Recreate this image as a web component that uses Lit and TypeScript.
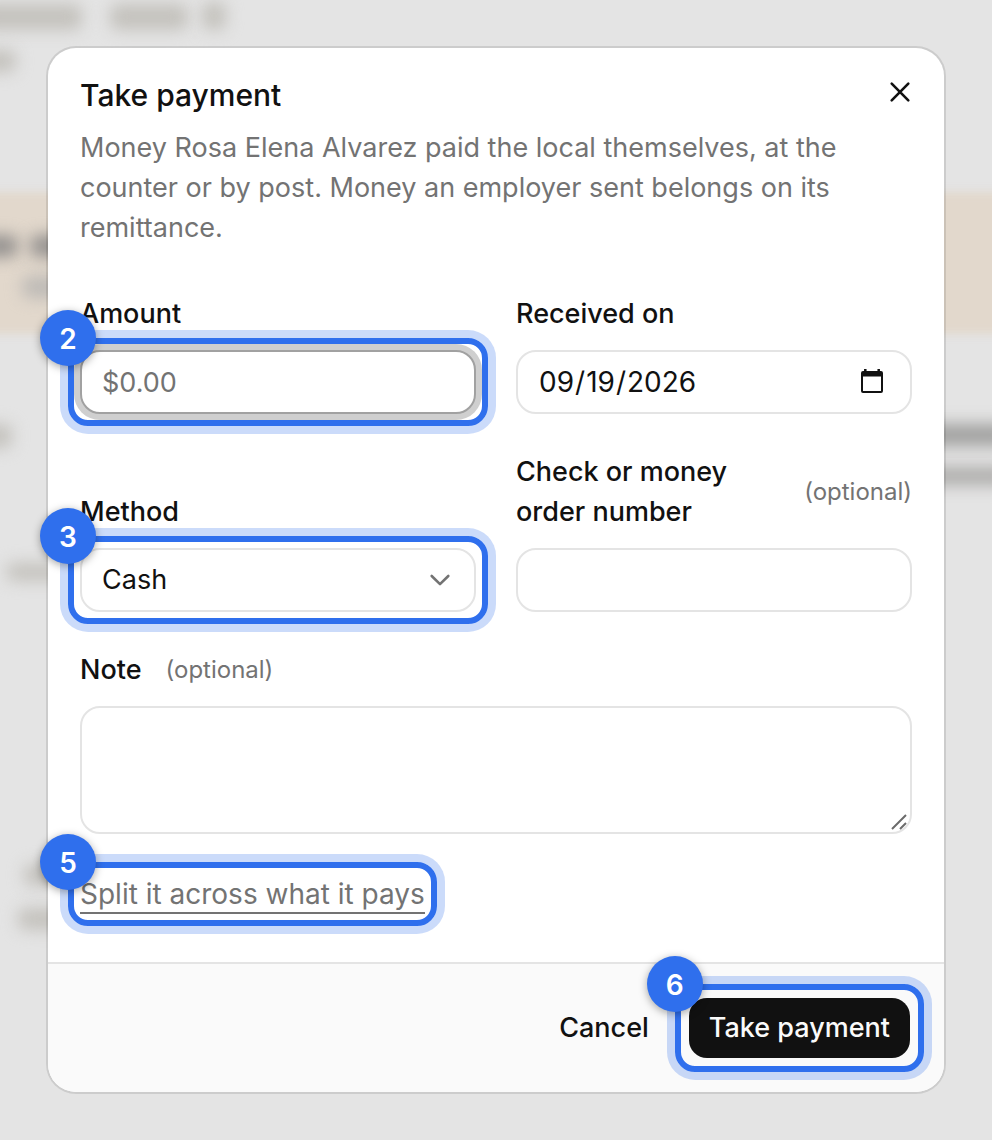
import { LitElement, html, css, svg } from "lit";
import { customElement, property } from "lit/decorators.js";

/* Numbered highlight drawn round whatever control is slotted into it. */
@customElement("tour-step")
class TourStep extends LitElement {
  @property({ type: Number }) step = 0;

  static styles = css`
    :host {
      display: block;
      position: relative;
    }
    .ring {
      position: absolute;
      inset: -12px;
      border: 6px solid #2f6fed;
      border-radius: 20px;
      box-shadow: 0 0 0 8px rgba(47, 111, 237, 0.25);
      pointer-events: none;
    }
    .badge {
      box-sizing: border-box;
      position: absolute;
      top: -40px;
      left: -40px;
      width: 56px;
      height: 56px;
      padding-top: 2px;
      border-radius: 50%;
      display: grid;
      place-items: center;
      background: #2f6fed;
      color: #fff;
      font-size: 28px;
      font-weight: 600;
      line-height: 32px;
      box-shadow: 0 2px 8px rgba(0, 0, 0, 0.35);
      pointer-events: none;
    }
  `;

  render() {
    return html`
      <slot></slot>
      <span class="ring"></span>
      <span class="badge">${this.step}</span>
    `;
  }
}

@customElement("app-root")
class AppRoot extends LitElement {
  static styles = css`
    :host {
      display: block;
      position: relative;
      box-sizing: border-box;
      min-height: 100vh;
      padding: 48px;
      overflow: hidden;
      background: #e4e4e4;
      color: #111;
      font-family: Inter, "Liberation Sans", sans-serif;
      font-size: 27px;
      line-height: 40px;
    }
    * {
      box-sizing: border-box;
    }

    /* Page behind the dialog, out of focus */
    .behind {
      position: absolute;
      inset: 0;
      overflow: hidden;
    }
    .behind i {
      position: absolute;
      border-radius: 8px;
      filter: blur(8px);
      background: #c4c2bd;
    }
    .behind .band {
      left: -40px;
      right: -40px;
      top: 192px;
      height: 142px;
      border-radius: 0;
      background: #e2d8cc;
      filter: blur(4px);
    }
    .b1 { left: -20px; top: 4px; width: 102px; height: 26px; }
    .b2 { left: 110px; top: 4px; width: 78px; height: 26px; }
    .b3 { left: 202px; top: 2px; width: 24px; height: 28px; }
    .b4 { left: -20px; top: 50px; width: 36px; height: 22px; }
    .behind .b5 { left: -20px; top: 235px; width: 38px; height: 22px; background: #94918f; }
    .behind .b13 { left: 30px; top: 235px; width: 60px; height: 22px; background: #94918f; }
    .behind .b6 { left: 22px; top: 276px; width: 80px; height: 22px; background: #bdbab6; }
    .b7 { left: -20px; top: 424px; width: 32px; height: 24px; }
    .b8 { left: 6px; top: 563px; width: 80px; height: 18px; }
    .b9 { left: 24px; top: 864px; width: 60px; height: 22px; }
    .b10 { left: 18px; top: 908px; width: 60px; height: 22px; }
    .behind .b11 { right: -20px; top: 424px; width: 90px; height: 22px; background: #a0a09f; }
    .behind .b12 { right: -20px; top: 467px; width: 90px; height: 18px; background: #acaba9; }

    .dialog {
      position: relative;
      border-radius: 28px;
      background: #fff;
      box-shadow: 0 0 0 2px rgba(0, 0, 0, 0.1);
    }
    .body {
      padding: 28px 32px 48px;
    }
    .head {
      display: flex;
      justify-content: space-between;
      align-items: flex-start;
    }
    h1 {
      margin: 0;
      font-size: 30px;
      font-weight: 500;
      line-height: 38px;
    }
    p {
      margin: 14px 0 46px;
      color: #737373;
    }
    .close {
      display: grid;
      place-items: center;
      width: 24px;
      height: 32px;
      padding: 0;
      border: 0;
      background: none;
      color: inherit;
    }
    .fields {
      display: grid;
      grid-template-columns: 1fr 1fr;
      align-items: end;
      gap: 38px 40px;
    }
    .wide {
      grid-column: 1 / -1;
    }
    label {
      display: flex;
      align-items: center;
      gap: 24px;
      margin-bottom: 16px;
      font-weight: 500;
    }
    .split {
      justify-content: space-between;
    }
    .opt {
      color: #737373;
      font-size: 24px;
      font-weight: 400;
    }
    input,
    select,
    textarea {
      display: block;
      width: 100%;
      height: 64px;
      margin: 0;
      padding: 0 20px;
      border: 2px solid #e4e4e4;
      border-radius: 20px;
      outline: none;
      background: #fff;
      color: #111;
      font: inherit;
      appearance: none;
    }
    input::placeholder {
      color: #737373;
      opacity: 1;
    }
    .focused {
      border-color: #a1a1a1;
      box-shadow: 0 0 0 6px #cfcfcf;
    }
    .date {
      font-size: 28px;
    }
    .date::-webkit-calendar-picker-indicator {
      width: 32px;
      height: 32px;
      margin: 0;
      padding: 0;
      opacity: 0;
    }
    .control {
      position: relative;
    }
    .glyph {
      position: absolute;
      display: block;
      pointer-events: none;
    }
    .calendar {
      right: 26px;
      top: 18px;
    }
    .chevron {
      right: 24px;
      top: 20px;
    }
    .grip {
      right: 4px;
      bottom: 4px;
    }
    textarea {
      height: 128px;
      padding: 12px 20px;
      resize: none;
    }
    .linkrow {
      display: flex;
      margin-top: 40px;
    }
    a {
      display: block;
      height: 40px;
      border-bottom: 2px solid #737373;
      color: #737373;
      font-size: 28px;
      text-decoration: none;
    }
    footer {
      display: flex;
      justify-content: flex-end;
      align-items: center;
      gap: 16px;
      padding: 32px;
      border-top: 2px solid #e4e4e4;
      border-radius: 0 0 28px 28px;
      background: #fafafa;
    }
    .btn {
      display: block;
      height: 64px;
      padding: 0 20px;
      border: 2px solid transparent;
      border-radius: 20px;
      background: transparent;
      background-clip: padding-box;
      color: #111;
      font: inherit;
      font-weight: 500;
      white-space: nowrap;
    }
    .primary {
      background-color: #111;
      color: #fafafa;
    }
  `;

  private icon(name: string, w: number, h: number, body: unknown) {
    return html`<svg class="glyph ${name}" width=${w} height=${h} viewBox="0 0 ${w} ${h}" fill="none" aria-hidden="true">${body}</svg>`;
  }

  render() {
    return html`
      <div class="behind" aria-hidden="true">
        <i class="band"></i>
        ${[1, 2, 3, 4, 5, 6, 7, 8, 9, 10, 11, 12, 13].map((n) => html`<i class="b${n}"></i>`)}
      </div>

      <form class="dialog" role="dialog" aria-labelledby="title">
        <div class="body">
          <div class="head">
            <h1 id="title">Take payment</h1>
            <button class="close" type="button" aria-label="Close">
              <svg width="24" height="24" viewBox="0 0 24 24" fill="none" stroke="currentColor" stroke-width="2.6" stroke-linecap="round">
                <path d="M3.700 3.700l16.600 16.600M20.300 3.700l-16.600 16.600" />
              </svg>
            </button>
          </div>
          <p>
            Money Rosa Elena Alvarez paid the local themselves, at the counter or by post. Money an employer sent
            belongs on its remittance.
          </p>

          <div class="fields">
            <div>
              <label for="amount">Amount</label>
              <tour-step step="2"><input id="amount" class="focused" type="text" placeholder="$0.00" /></tour-step>
            </div>
            <div>
              <label for="received">Received on</label>
              <div class="control">
                <input id="received" class="date" type="date" value="2026-09-19" />
                ${this.icon("calendar", 28, 28, svg`
                  <path d="M7.300 1V5M20.700 1V5" stroke="#111" stroke-width="2.500" />
                  <path fill="#111" fill-rule="evenodd" d="M5 3H23Q25 3 25 5V23Q25 25 23 25H5Q3 25 3 23V5Q3 3 5 3ZM5 8.500V23H23V8.500Z" />`)}
              </div>
            </div>
            <div>
              <label for="method">Method</label>
              <tour-step step="3">
                <div class="control">
                  <select id="method"><option>Cash</option></select>
                  ${this.icon("chevron", 24, 24, svg`<path d="M3.700 8l8.300 8.200L20.300 8" stroke="#737373" stroke-width="2.600" stroke-linecap="round" stroke-linejoin="round" />`)}
                </div>
              </tour-step>
            </div>
            <div>
              <label class="split" for="check">Check or money order number <span class="opt">(optional)</span></label>
              <input id="check" type="text" />
            </div>
            <div class="wide">
              <label for="note">Note <span class="opt">(optional)</span></label>
              <div class="control">
                <textarea id="note"></textarea>
                ${this.icon("grip", 17, 16, svg`<path d="M1 15L15 1M9 15l6-6" stroke="#6b6b6b" stroke-width="2" />`)}
              </div>
            </div>
          </div>

          <div class="linkrow">
            <tour-step step="5"><a href="#split">Split it across what it pays</a></tour-step>
          </div>
        </div>

        <footer>
          <button class="btn" type="button">Cancel</button>
          <tour-step step="6"><button class="btn primary" type="button">Take payment</button></tour-step>
        </footer>
      </form>
    `;
  }
}
